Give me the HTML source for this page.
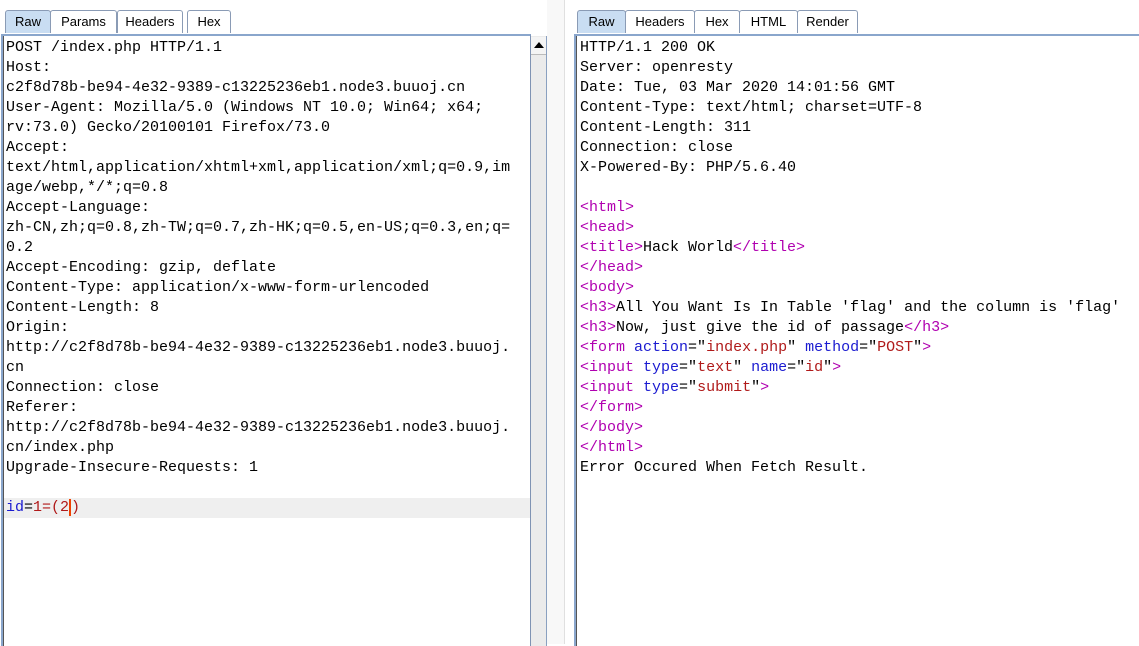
<!DOCTYPE html>
<html><head><style>
body{margin:0;width:1139px;height:644px;background:#fff;position:relative;overflow:hidden;font-family:"Liberation Sans",sans-serif}
.tab{position:absolute;top:10px;height:23px;border:1px solid #8a9bb5;border-bottom:none;border-radius:3px 3px 0 0;background:#fff;font-size:13px;line-height:22px;text-align:center;box-sizing:border-box;color:#000}
.tab.sel{background:#c9ddf2}
.pane{position:absolute;top:34px;bottom:-2px;border-top:2px solid #8aa6cc;border-left:2px solid #8aa6cc;box-sizing:border-box}
.txt{position:absolute;font-family:"Liberation Mono","Noto Sans CJK SC",monospace;font-size:15px;line-height:20px;white-space:pre;color:#000}
.t{color:#b000b0}.a{color:#1a1ad0}.v{color:#b01a1a}
</style></head><body>
<div class="tab sel" style="left:5px;width:46px">Raw</div>
<div class="tab" style="left:50px;width:67px">Params</div>
<div class="tab" style="left:117px;width:66px">Headers</div>
<div class="tab" style="left:187px;width:44px">Hex</div>
<div class="pane" style="left:1px;width:530px;border-right:1px solid #7f93b3"></div>
<div style="position:absolute;left:3px;top:36px;width:527px;height:610px;border-left:1px solid #555"></div>
<div style="position:absolute;left:531px;top:36px;width:15px;height:610px;background:#ebebeb;border-right:1px solid #8aa0c0"></div>
<div style="position:absolute;left:531px;top:37px;width:15px;height:17px;background:#f4f4f4;border-bottom:1px solid #bbb"></div>
<div style="position:absolute;left:534px;top:42px;width:0;height:0;border-left:5px solid transparent;border-right:5px solid transparent;border-bottom:6px solid #000"></div>
<div style="position:absolute;left:547px;top:0;width:17px;height:644px;background:#f8f8f8;border-right:1px solid #e0e0e0"></div>
<div style="position:absolute;left:4px;top:498px;width:526px;height:20px;background:#efefef"></div>
<div class="txt" style="left:6px;top:38px">POST /index.php HTTP/1.1
Host:
c2f8d78b-be94-4e32-9389-c13225236eb1.node3.buuoj.cn
User-Agent: Mozilla/5.0 (Windows NT 10.0; Win64; x64;
rv:73.0) Gecko/20100101 Firefox/73.0
Accept:
text/html,application/xhtml+xml,application/xml;q=0.9,im
age/webp,*/*;q=0.8
Accept-Language:
zh-CN,zh;q=0.8,zh-TW;q=0.7,zh-HK;q=0.5,en-US;q=0.3,en;q=
0.2
Accept-Encoding: gzip, deflate
Content-Type: application/x-www-form-urlencoded
Content-Length: 8
Origin:
http://c2f8d78b-be94-4e32-9389-c13225236eb1.node3.buuoj.
cn
Connection: close
Referer:
http://c2f8d78b-be94-4e32-9389-c13225236eb1.node3.buuoj.
cn/index.php
Upgrade-Insecure-Requests: 1

<span class="a">id</span>=<span class="v">1=(2</span><span style="border-left:2px solid #f04000"></span><span class="v">)</span></div>

<div class="tab sel" style="left:577px;width:49px">Raw</div>
<div class="tab" style="left:625px;width:70px">Headers</div>
<div class="tab" style="left:694px;width:46px">Hex</div>
<div class="tab" style="left:739px;width:59px">HTML</div>
<div class="tab" style="left:797px;width:61px">Render</div>
<div class="pane" style="left:574px;width:580px"></div>
<div style="position:absolute;left:576px;top:36px;width:1px;height:610px;background:#555"></div>
<div class="txt" style="left:580px;top:38px">HTTP/1.1 200 OK
Server: openresty
Date: Tue, 03 Mar 2020 14:01:56 GMT
Content-Type: text/html; charset=UTF-8
Content-Length: 311
Connection: close
X-Powered-By: PHP/5.6.40

<span class="t">&lt;html&gt;</span>
<span class="t">&lt;head&gt;</span>
<span class="t">&lt;title&gt;</span>Hack World<span class="t">&lt;/title&gt;</span>
<span class="t">&lt;/head&gt;</span>
<span class="t">&lt;body&gt;</span>
<span class="t">&lt;h3&gt;</span>All You Want Is In Table 'flag' and the column is 'flag'
<span class="t">&lt;h3&gt;</span>Now, just give the id of passage<span class="t">&lt;/h3&gt;</span>
<span class="t">&lt;form</span> <span class="a">action</span>="<span class="v">index.php</span>" <span class="a">method</span>="<span class="v">POST</span>"<span class="t">&gt;</span>
<span class="t">&lt;input</span> <span class="a">type</span>="<span class="v">text</span>" <span class="a">name</span>="<span class="v">id</span>"<span class="t">&gt;</span>
<span class="t">&lt;input</span> <span class="a">type</span>="<span class="v">submit</span>"<span class="t">&gt;</span>
<span class="t">&lt;/form&gt;</span>
<span class="t">&lt;/body&gt;</span>
<span class="t">&lt;/html&gt;</span>
Error Occured When Fetch Result.</div>
</body></html>
